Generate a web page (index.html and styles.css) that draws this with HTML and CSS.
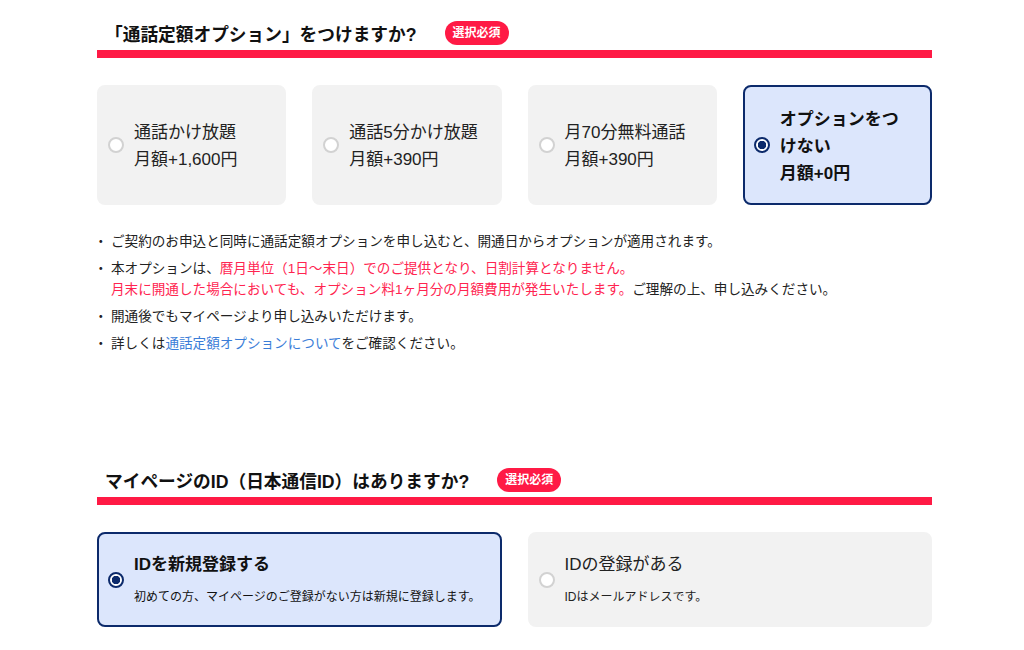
FILE: index.html
```html
<!DOCTYPE html>
<html lang="ja">
<head>
    <meta charset="UTF-8">
    <meta name="viewport" content="width=device-width, initial-scale=1.0">
    <title>お申し込み</title>
    <link rel="stylesheet" href="styles.css">
</head>
<body>
    <div class="container">
        <section class="section">
            <div class="section-head">
                <h2>「通話定額オプション」をつけますか?</h2>
                <span class="required">選択必須</span>
            </div>

            <div class="options options-4">
                <label class="option">
                    <span class="radio"></span>
                    <span class="option-text">通話かけ放題<br>月額+1,600円</span>
                </label>
                <label class="option">
                    <span class="radio"></span>
                    <span class="option-text">通話5分かけ放題<br>月額+390円</span>
                </label>
                <label class="option">
                    <span class="radio"></span>
                    <span class="option-text">月70分無料通話<br>月額+390円</span>
                </label>
                <label class="option selected">
                    <span class="radio"></span>
                    <span class="option-text">オプションをつけない<br>月額+0円</span>
                </label>
            </div>

            <ul class="notes">
                <li>ご契約のお申込と同時に通話定額オプションを申し込むと、開通日からオプションが適用されます。</li>
                <li>本オプションは、<span class="red">暦月単位（1日〜末日）でのご提供となり、日割計算となりません。<br>月末に開通した場合においても、オプション料1ヶ月分の月額費用が発生いたします。</span>ご理解の上、申し込みください。</li>
                <li>開通後でもマイページより申し込みいただけます。</li>
                <li>詳しくは<a href="#">通話定額オプションについて</a>をご確認ください。</li>
            </ul>
        </section>

        <section class="section section-id">
            <div class="section-head">
                <h2>マイページのID（日本通信ID）はありますか?</h2>
                <span class="required">選択必須</span>
            </div>

            <div class="options options-2">
                <label class="option option-wide selected">
                    <span class="radio"></span>
                    <span class="option-text">
                        <span class="option-title">IDを新規登録する</span>
                        <span class="option-sub">初めての方、マイページのご登録がない方は新規に登録します。</span>
                    </span>
                </label>
                <label class="option option-wide">
                    <span class="radio"></span>
                    <span class="option-text">
                        <span class="option-title">IDの登録がある</span>
                        <span class="option-sub">IDはメールアドレスです。</span>
                    </span>
                </label>
            </div>
        </section>
    </div>
</body>
</html>
```

FILE: styles.css
```css
body {
    margin: 0;
    font-family: "Liberation Sans", "Noto Sans CJK JP", sans-serif;
    color: #1a1a1a;
    background: #fff;
}
.container {
    width: 835px;
    margin-left: 97px;
    padding-top: 19px;
}
.section-head {
    display: flex;
    align-items: center;
    height: 28px;
    padding-left: 8px;
    padding-bottom: 3px;
    border-bottom: 8px solid #ff1a45;
}
.section-head h2 {
    margin: 0;
    font-size: 17.7px;
    font-weight: 700;
    color: #111;
}
.required {
    margin-left: 28px;
    padding: 0 8px;
    height: 24px;
    line-height: 24px;
    border-radius: 12px;
    background: #ff1a45;
    color: #fff;
    font-size: 12px;
    font-weight: 700;
}
.options {
    display: grid;
    gap: 26px;
    margin-top: 27px;
}
.options-4 {
    grid-template-columns: repeat(4, 1fr);
}
.options-2 {
    grid-template-columns: repeat(2, 1fr);
}
.option {
    display: flex;
    align-items: center;
    gap: 10px;
    height: 120px;
    box-sizing: border-box;
    padding: 0 18px 0 9px;
    border: 2px solid #f2f2f2;
    border-radius: 8px;
    background: #f2f2f2;
    cursor: pointer;
}
.option.selected {
    background: #dce6fc;
    border-color: #0c2a6b;
}
.radio {
    flex: none;
    width: 16px;
    height: 16px;
    box-sizing: border-box;
    border: 2px solid #d2d2d2;
    border-radius: 50%;
    background: #fff;
}
.selected .radio {
    border-color: #0c2a6b;
    background: radial-gradient(circle, #0c2a6b 0 4px, #fff 4.5px);
}
.option-text {
    font-size: 17px;
    line-height: 27px;
    padding-top: 2px;
    color: #222;
}
.selected .option-text {
    font-weight: 700;
    color: #111;
}
.notes {
    list-style: none;
    margin: 26px 0 0;
    padding: 0;
    font-size: 13.6px;
    line-height: 21px;
    color: #222;
}
.notes li {
    position: relative;
    padding-left: 14px;
    margin-bottom: 6px;
}
.notes li::before {
    content: "・";
    position: absolute;
    left: -3px;
}
.red {
    color: #ff2450;
}
.notes a {
    color: #3a7dd8;
    text-decoration: none;
}
.section-id {
    margin-top: 112px;
}
.option-wide {
    height: 95px;
}
.option-wide .option-text {
    padding-top: 0;
}
.option-title {
    display: block;
    font-size: 17px;
    line-height: 24px;
    font-weight: 400;
}
.selected .option-title {
    font-weight: 700;
}
.option-sub {
    display: block;
    margin-top: 11px;
    font-size: 12px;
    line-height: 18px;
    font-weight: 400;
}
```
